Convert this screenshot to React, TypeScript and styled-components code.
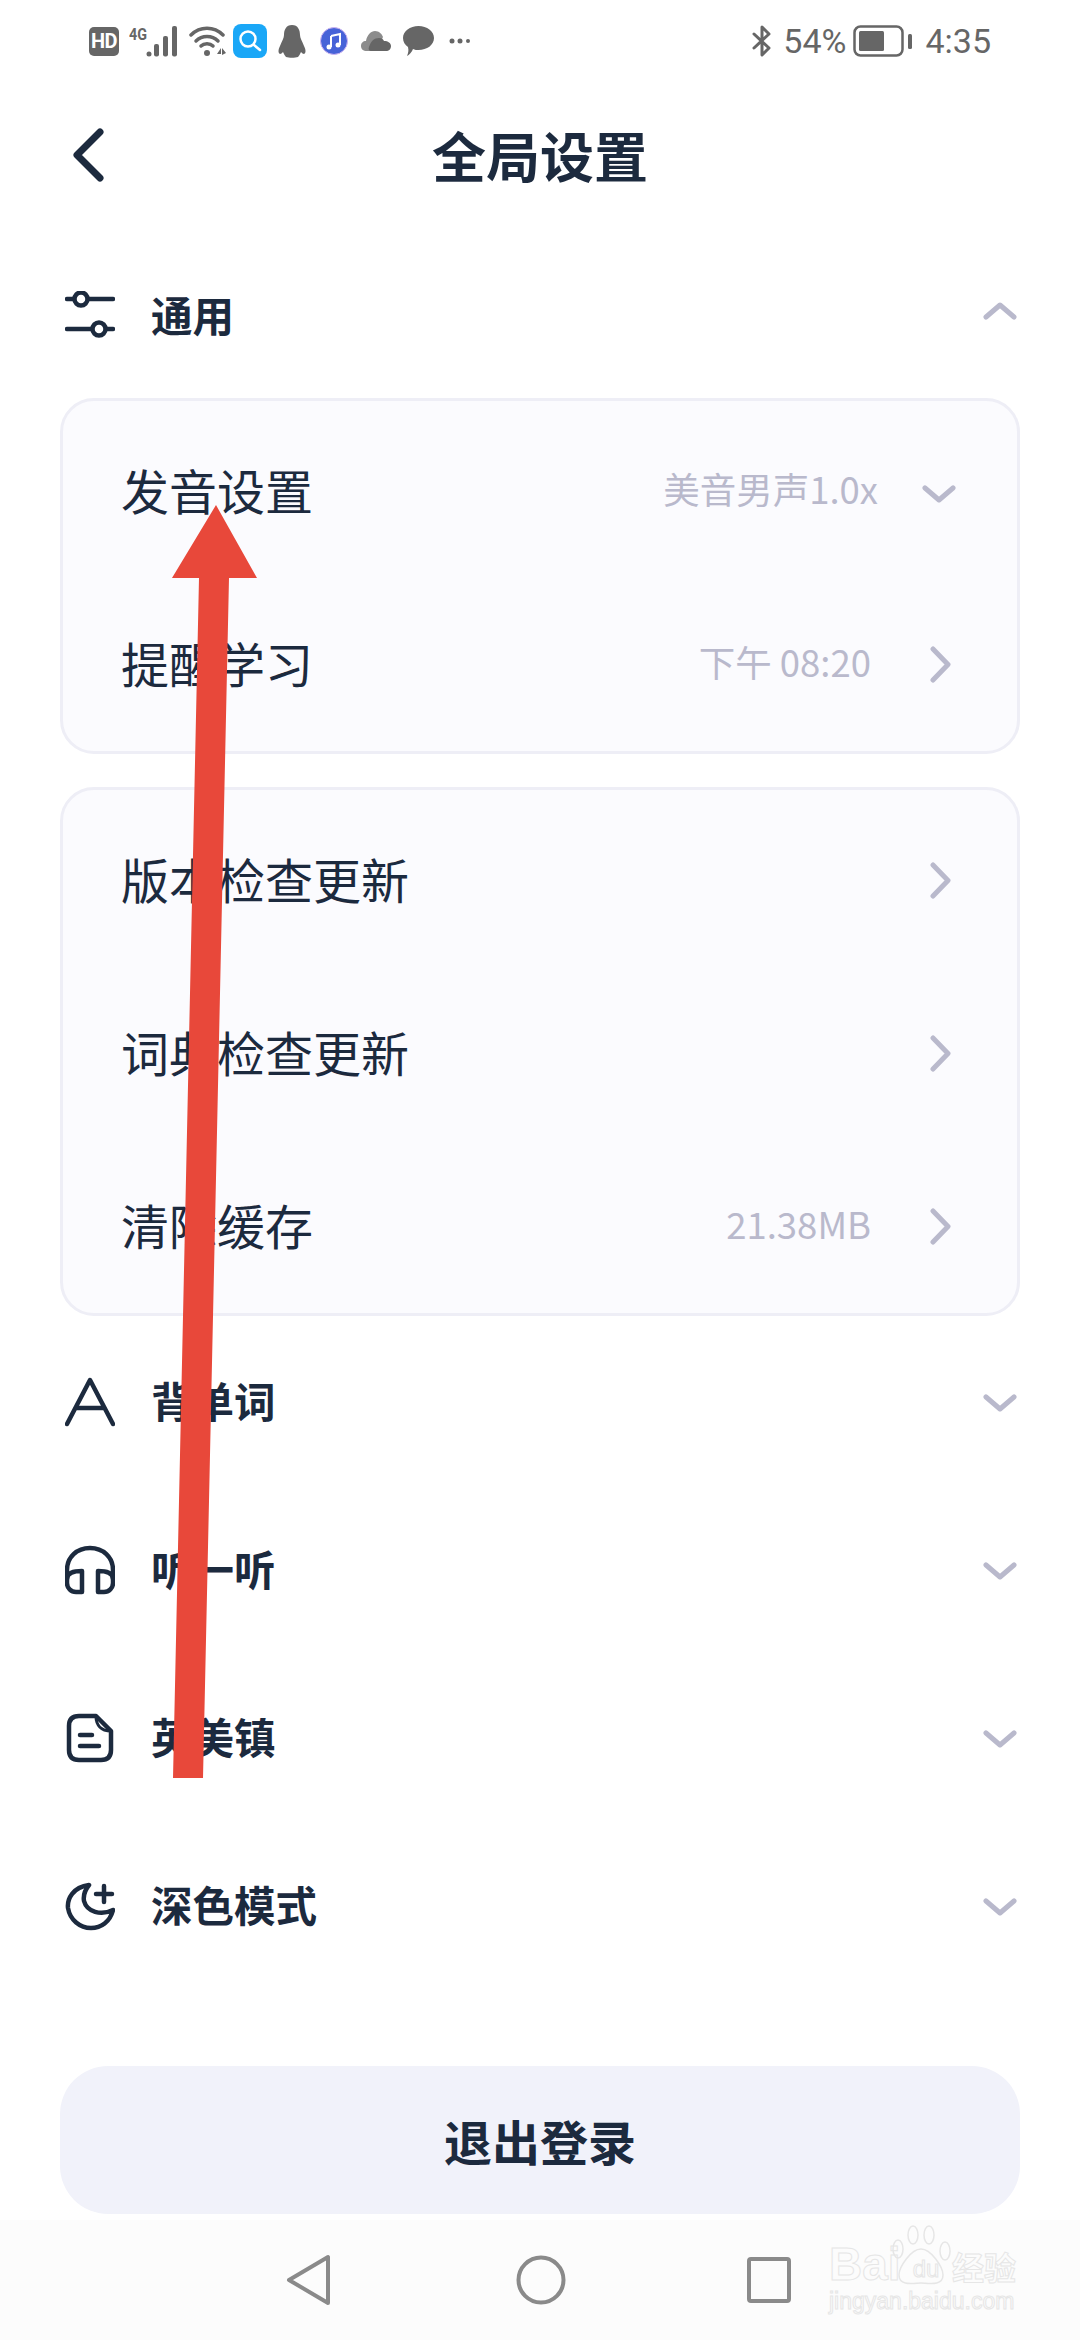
import React from "react";
import styled, { createGlobalStyle } from "styled-components";

const INK = "#1c2a3e";
const MUTED = "#b9b9cc";
const STATUS = "#666666";
const MARK = "#e6e6e6";
const CJK = `"Noto Sans CJK SC", "Noto Sans", sans-serif`;

const GlobalStyle = createGlobalStyle`
	html, body {
		margin: 0;
		padding: 0;
		background: #ffffff;
	}
	* {
		box-sizing: border-box;
	}
`;

const Page = styled.div`
	position: relative;
	width: 1080px;
	height: 2340px;
	overflow: hidden;
	background: #ffffff;
	font-family: ${CJK};
	color: ${INK};
`;

const StatusBar = styled.div`
	display: flex;
	align-items: center;
	justify-content: space-between;
	height: 82px;
	padding: 0 89px 0 89px;
	color: ${STATUS};
`;

const StatusGroup = styled.div`
	display: flex;
	align-items: center;
`;

const StatusSlot = styled.span<{ $gap: number }>`
	display: flex;
	align-items: center;
	margin-left: ${(p) => p.$gap}px;
`;

const HdBadge = styled.span`
	display: flex;
	align-items: center;
	justify-content: center;
	width: 30px;
	height: 29px;
	border-radius: 5px;
	background: ${STATUS};
	color: #ffffff;
	font: 700 20px "Roboto", sans-serif;
	letter-spacing: -0.5px;
`;

const StatusText = styled.span`
	font: 400 34px/1 "Roboto", sans-serif;
	color: ${STATUS};
`;

const Header = styled.div`
	display: flex;
	align-items: center;
	justify-content: center;
	position: relative;
	height: 152px;
	padding-bottom: 6px;
`;

const BackButton = styled.span`
	position: absolute;
	left: 72px;
	top: 46px;
	display: flex;
`;

const Title = styled.h1`
	margin: 0;
	font-size: 54px;
	line-height: 1;
	font-weight: 700;
`;

const SectionRow = styled.div<{ $first?: boolean }>`
	display: flex;
	align-items: center;
	height: ${(p) => (p.$first ? 164 : 168)}px;
	padding: 0 63px 0 65px;
`;

const SectionIcon = styled.span`
	display: flex;
	width: 50px;
	height: 50px;
	margin-right: 36px;
`;

const SectionTitle = styled.span`
	flex: 1;
	padding-bottom: 3px;
	font-size: 41.5px;
	line-height: 1;
	font-weight: 700;
`;

const SectionChevron = styled.span<{ $up?: boolean }>`
	display: flex;
	margin-top: ${(p) => (p.$up ? -10 : 2)}px;
`;

const Card = styled.div`
	margin: 0 60px;
	padding-top: 4px;
	background: #fbfbfe;
	border: 3px solid #eeeef6;
	border-radius: 34px;
`;

const CardGap = styled.div<{ $height: number }>`
	height: ${(p) => p.$height}px;
`;

const Row = styled.div`
	display: flex;
	align-items: center;
	height: 173px;
	padding: 0 53px 0 58px;
`;

const RowLabel = styled.span`
	flex: 1;
	padding-bottom: 6px;
	font-size: 48px;
	line-height: 1;
	font-weight: 400;
`;

const RowValue = styled.span<{ $gap: number }>`
	margin-right: ${(p) => p.$gap}px;
	padding-bottom: 5px;
	font-size: 36.5px;
	line-height: 1;
	color: ${MUTED};
`;

const RowChevron = styled.span<{ $down?: boolean }>`
	display: flex;
	justify-content: center;
	width: 50px;
	margin-top: ${(p) => (p.$down ? 5 : 0)}px;
	padding-left: ${(p) => (p.$down ? 0 : 2)}px;
`;

const LogoutButton = styled.button`
	display: block;
	width: 960px;
	height: 148px;
	margin: 76px 60px 0;
	border: 0;
	border-radius: 48px;
	background: #f1f2fa;
	color: ${INK};
	font-family: ${CJK};
	font-size: 48px;
	font-weight: 700;
`;

const NavBar = styled.div`
	position: relative;
	display: flex;
	align-items: center;
	height: 120px;
	margin-top: 6px;
	padding: 0 0 0 286px;
	background: #fcfcfc;
`;

const NavSlot = styled.span<{ $gap: number }>`
	display: flex;
	margin-left: ${(p) => p.$gap}px;
`;

const Watermark = styled.div`
	position: absolute;
	left: 829px;
	top: 5px;
	width: 194px;
	height: 92px;
	color: transparent;
	-webkit-text-stroke: 1px ${MARK};
`;

const MarkLine = styled.div`
	display: flex;
	align-items: flex-end;
	height: 62px;
	white-space: nowrap;
`;

const MarkLatin = styled.span`
	width: 71px;
	font: 700 46px/46px "Liberation Sans", sans-serif;
`;

const MarkDu = styled.span`
	width: 52px;
	padding-bottom: 4px;
	text-align: center;
	font: 400 24px/28px "Liberation Sans", sans-serif;
`;

const MarkCjk = styled.span`
	font: 700 32px/42px ${CJK};
`;

const MarkUrl = styled.div`
	font: 400 23px/28px "Liberation Sans", sans-serif;
	white-space: nowrap;
`;

const MarkPaw = styled.svg`
	position: absolute;
	left: 62px;
	top: 0;
`;

const ArrowOverlay = styled.svg`
	position: absolute;
	left: 0;
	top: 0;
	pointer-events: none;
`;

const Chevron = ({ dir }: { dir: "up" | "down" | "right" }) => {
	const points = {
		up: "3,15 17,3 31,15",
		down: "3,3 17,15 31,3",
		right: "3,3 18,18.5 3,34",
	}[dir];
	const isRight = dir === "right";
	return (
		<svg
			width={isRight ? 21 : 34}
			height={isRight ? 37 : 18}
			viewBox={isRight ? "0 0 21 37" : "0 0 34 18"}
			fill="none"
			stroke={MUTED}
			strokeWidth={5}
			strokeLinecap="round"
			strokeLinejoin="round"
		>
			<polyline points={points} />
		</svg>
	);
};

const iconProps = {
	width: 50,
	height: 50,
	viewBox: "0 0 50 50",
	fill: "none",
	stroke: INK,
	strokeWidth: 4.5,
	strokeLinecap: "round" as const,
	strokeLinejoin: "round" as const,
};

const SlidersIcon = () => (
	<svg {...iconProps}>
		<path d="M2 8H9M23 8H48M2 38H27M41 38H48" />
		<circle cx="16" cy="8" r="6.5" />
		<circle cx="34" cy="38" r="6.5" />
	</svg>
);

const LetterIcon = () => (
	<svg {...iconProps}>
		<path d="M2 47L25 3L48 47M11 31H39" />
	</svg>
);

const HeadphonesIcon = () => (
	<svg {...iconProps}>
		<path d="M2 34V25C2 12 12 3 25 3C38 3 48 12 48 25V34" />
		<path d="M2 34C2 28 8 26 17 26V47H11C6 47 2 43 2 38Z" />
		<path d="M48 34C48 28 42 26 33 26V47H39C44 47 48 43 48 38Z" />
	</svg>
);

const NoteIcon = () => (
	<svg {...iconProps}>
		<path d="M31 3H14C7 3 4 7 4 13V37C4 43 7 47 14 47H36C43 47 46 43 46 37V18Z" />
		<path d="M31 3C31 12 36 18 46 18" strokeWidth={3} />
		<path d="M15 22H27M15 33H34" />
	</svg>
);

const MoonIcon = () => (
	<svg {...iconProps}>
		<path d="M24 4C8 6 2 18 3 27C5 39 15 47 26 47C36 47 45 41 48 29C36 35 22 31 19 20C18 14 20 9 24 4Z" />
		<path d="M39 5V21M31 13H47" />
	</svg>
);

const SignalIcon = () => (
	<svg width="50" height="31" viewBox="0 0 50 31" fill={STATUS}>
		<text x="0" y="14" fontFamily="Roboto, sans-serif" fontWeight="700" fontSize="16" textLength="18" lengthAdjust="spacingAndGlyphs">
			4G
		</text>
		<circle cx="20" cy="28" r="2.5" />
		<rect x="25" y="18" width="5" height="12.5" rx="2" />
		<rect x="34" y="10" width="5" height="20.5" rx="2" />
		<rect x="43" y="0" width="5" height="30.5" rx="2" />
	</svg>
);

const WifiIcon = () => (
	<svg width="38" height="32" viewBox="0 0 38 32">
		<g fill="none" stroke={STATUS} strokeWidth="3.5" strokeLinecap="round">
			<path d="M2 10C11 1 25 1 34 10" />
			<path d="M7 16C13 10 23 10 29 16" />
			<path d="M12 21C15 18 21 18 24 21" />
		</g>
		<circle cx="18" cy="28" r="3" fill={STATUS} />
		<path d="M28 29L32 23V29ZM33 23L37 28L33 30Z" fill={STATUS} />
	</svg>
);

const SearchAppIcon = () => (
	<svg width="34" height="34" viewBox="0 0 34 34">
		<rect width="34" height="34" rx="8" fill="#1aa7f7" />
		<circle cx="15" cy="15" r="7.5" fill="none" stroke="#ffffff" strokeWidth="2.5" />
		<path d="M21 21L27 26" stroke="#ffffff" strokeWidth="2.5" strokeLinecap="round" />
	</svg>
);

const PenguinIcon = () => (
	<svg width="28" height="33" viewBox="0 0 28 33" fill={STATUS}>
		<path d="M14 0C8 0 6 5 6 10C6 13 4 16 2 21C0 25 0 28 2 29C3 29 4 28 5 27C6 29 7 31 8 32C11 33 17 33 20 32C21 31 22 29 23 27C24 28 25 29 26 29C28 28 28 25 26 21C24 16 22 13 22 10C22 5 20 0 14 0Z" />
	</svg>
);

const MusicIcon = () => (
	<svg width="28" height="28" viewBox="0 0 28 28">
		<circle cx="14" cy="14" r="13.5" fill="#4763d8" stroke="#cdb4f0" strokeWidth="1" />
		<path d="M11 9L20 7V18" fill="none" stroke="#ffffff" strokeWidth="2" />
		<path d="M11 9V20" fill="none" stroke="#ffffff" strokeWidth="2" />
		<circle cx="9" cy="20" r="2.5" fill="#ffffff" />
		<circle cx="18" cy="18" r="2.5" fill="#ffffff" />
	</svg>
);

const CloudIcon = () => (
	<svg width="30" height="20" viewBox="0 0 30 20">
		<path d="M6 20C2 20 0 18 0 15C0 12 2 10 5 10C6 4 10 0 14 0C18 0 21 3 22 6L15 20Z" fill="#8c8c8c" />
		<path d="M10 20C8 20 7 18 8 16C10 10 13 7 18 7C21 7 22 8 23 10C27 10 30 12 30 15C30 18 28 20 25 20Z" fill={STATUS} />
	</svg>
);

const BubbleIcon = () => (
	<svg width="31" height="30" viewBox="0 0 31 30" fill={STATUS}>
		<path d="M15.5 0C24 0 31 5 31 12C31 19 24 24 15.5 24C13.5 24 12 24 10 23C9 26 6 29 4 30C5 27 6 25 5 21C2 19 0 16 0 12C0 5 7 0 15.5 0Z" />
	</svg>
);

const DotsIcon = () => (
	<svg width="22" height="6" viewBox="0 0 22 6" fill={STATUS}>
		<circle cx="3" cy="3" r="2.5" />
		<circle cx="11" cy="3" r="2.5" />
		<circle cx="19" cy="3" r="2" />
	</svg>
);

const BluetoothIcon = () => (
	<svg width="20" height="32" viewBox="0 0 20 32" fill="none" stroke={STATUS} strokeWidth="3" strokeLinecap="round" strokeLinejoin="round">
		<path d="M2 9L17 23L10 30V2L17 9L2 23" />
	</svg>
);

const BatteryIcon = () => (
	<svg width="59" height="32" viewBox="0 0 59 32">
		<rect x="1.5" y="1.5" width="48" height="29" rx="6" fill="none" stroke={STATUS} strokeWidth="2.5" />
		<rect x="6" y="6" width="25" height="20" rx="1.5" fill={STATUS} />
		<rect x="55" y="9" width="4" height="15" rx="1.5" fill={STATUS} />
	</svg>
);

const navStroke = {
	fill: "none",
	stroke: "#8a8a8a",
	strokeWidth: 4,
	strokeLinejoin: "round" as const,
};

const NavBack = () => (
	<svg width="45" height="52" viewBox="0 0 45 52">
		<path d="M42 3V49L3 26Z" {...navStroke} />
	</svg>
);

const NavHome = () => (
	<svg width="50" height="50" viewBox="0 0 50 50">
		<circle cx="25" cy="25" r="22.5" {...navStroke} />
	</svg>
);

const NavRecent = () => (
	<svg width="44" height="46" viewBox="0 0 44 46">
		<rect x="2" y="2" width="40" height="42" rx="2" {...navStroke} />
	</svg>
);

const sections = [
	{ title: "背单词", icon: <LetterIcon /> },
	{ title: "听一听", icon: <HeadphonesIcon /> },
	{ title: "英美镇", icon: <NoteIcon /> },
	{ title: "深色模式", icon: <MoonIcon /> },
];

export default function App() {
	return (
		<Page>
			<GlobalStyle />
			<StatusBar>
				<StatusGroup>
					<HdBadge>HD</HdBadge>
					<StatusSlot $gap={10}>
						<SignalIcon />
					</StatusSlot>
					<StatusSlot $gap={10}>
						<WifiIcon />
					</StatusSlot>
					<StatusSlot $gap={6}>
						<SearchAppIcon />
					</StatusSlot>
					<StatusSlot $gap={11}>
						<PenguinIcon />
					</StatusSlot>
					<StatusSlot $gap={14}>
						<MusicIcon />
					</StatusSlot>
					<StatusSlot $gap={13}>
						<CloudIcon />
					</StatusSlot>
					<StatusSlot $gap={12}>
						<BubbleIcon />
					</StatusSlot>
					<StatusSlot $gap={15}>
						<DotsIcon />
					</StatusSlot>
				</StatusGroup>
				<StatusGroup>
					<BluetoothIcon />
					<StatusSlot $gap={11}>
						<StatusText>54%</StatusText>
					</StatusSlot>
					<StatusSlot $gap={7}>
						<BatteryIcon />
					</StatusSlot>
					<StatusSlot $gap={13}>
						<StatusText>4:35</StatusText>
					</StatusSlot>
				</StatusGroup>
			</StatusBar>

			<Header>
				<BackButton>
					<svg width="32" height="54" viewBox="0 0 32 54" fill="none" stroke={INK} strokeWidth="7" strokeLinecap="round" strokeLinejoin="round">
						<polyline points="28,4 5,27 28,50" />
					</svg>
				</BackButton>
				<Title>全局设置</Title>
			</Header>

			<SectionRow $first>
				<SectionIcon>
					<SlidersIcon />
				</SectionIcon>
				<SectionTitle>通用</SectionTitle>
				<SectionChevron $up>
					<Chevron dir="up" />
				</SectionChevron>
			</SectionRow>

			<Card>
				<Row>
					<RowLabel>发音设置</RowLabel>
					<RowValue $gap={36}>美音男声1.0x</RowValue>
					<RowChevron $down>
						<Chevron dir="down" />
					</RowChevron>
				</Row>
				<Row>
					<RowLabel>提醒学习</RowLabel>
					<RowValue $gap={43}>下午 08:20</RowValue>
					<RowChevron>
						<Chevron dir="right" />
					</RowChevron>
				</Row>
			</Card>
			<CardGap $height={33} />
			<Card>
				<Row>
					<RowLabel>版本检查更新</RowLabel>
					<RowChevron>
						<Chevron dir="right" />
					</RowChevron>
				</Row>
				<Row>
					<RowLabel>词典检查更新</RowLabel>
					<RowChevron>
						<Chevron dir="right" />
					</RowChevron>
				</Row>
				<Row>
					<RowLabel>清除缓存</RowLabel>
					<RowValue $gap={43}>21.38MB</RowValue>
					<RowChevron>
						<Chevron dir="right" />
					</RowChevron>
				</Row>
			</Card>
			<CardGap $height={2} />

			{sections.map((s) => (
				<SectionRow key={s.title}>
					<SectionIcon>{s.icon}</SectionIcon>
					<SectionTitle>{s.title}</SectionTitle>
					<SectionChevron>
						<Chevron dir="down" />
					</SectionChevron>
				</SectionRow>
			))}

			<LogoutButton>退出登录</LogoutButton>

			<NavBar>
				<NavBack />
				<NavSlot $gap={185}>
					<NavHome />
				</NavSlot>
				<NavSlot $gap={181}>
					<NavRecent />
				</NavSlot>
				<Watermark>
					<MarkPaw width="62" height="62" viewBox="0 0 62 62" fill="none" stroke={MARK} strokeWidth="1.5">
						<ellipse cx="7" cy="24" rx="5" ry="9" />
						<ellipse cx="22" cy="10" rx="5" ry="9" />
						<ellipse cx="38" cy="10" rx="5" ry="9" />
						<ellipse cx="54" cy="26" rx="5" ry="9" />
						<path d="M30 24C40 24 52 42 52 50C52 62 36 58 30 58C24 58 8 62 8 50C8 42 20 24 30 24Z" />
					</MarkPaw>
					<MarkLine>
						<MarkLatin>Bai</MarkLatin>
						<MarkDu>du</MarkDu>
						<MarkCjk>经验</MarkCjk>
					</MarkLine>
					<MarkUrl>jingyan.baidu.com</MarkUrl>
				</Watermark>
			</NavBar>

			<ArrowOverlay width="1080" height="2340" viewBox="0 0 1080 2340">
				<polygon points="216,505 257,578 229,578 203,1778 173,1778 199,578 172,578" fill="#e8483a" />
			</ArrowOverlay>
		</Page>
	);
}
